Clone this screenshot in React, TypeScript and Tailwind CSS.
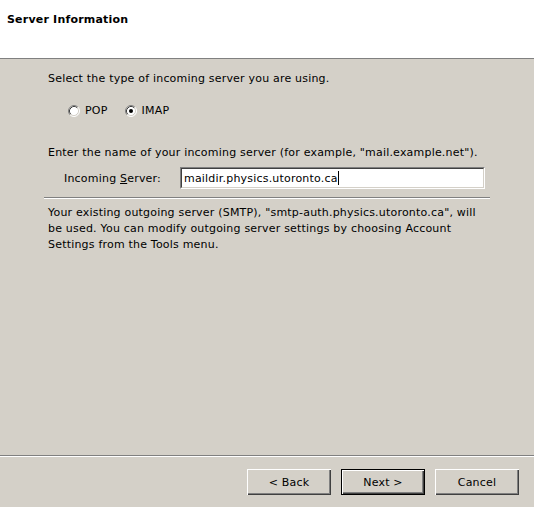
import React from "react";

const FONT = { fontFamily: '"DejaVu Sans", Tahoma, sans-serif' };

function Radio({ checked }: { checked?: boolean }) {
  return (
    <svg width="12" height="12" viewBox="0 0 12 12" className="shrink-0">
      <circle cx="6" cy="6" r="5" fill="#ffffff" />
      <path d="M2.11 9.89 A5.5 5.5 0 0 1 9.89 2.11" stroke="#808080" fill="none" />
      <path d="M9.89 2.11 A5.5 5.5 0 0 1 2.11 9.89" stroke="#ffffff" fill="none" />
      <path d="M2.82 9.18 A4.5 4.5 0 0 1 9.18 2.82" stroke="#404040" fill="none" />
      <path d="M9.18 2.82 A4.5 4.5 0 0 1 2.82 9.18" stroke="#d4d0c8" fill="none" />
      {checked && <circle cx="6" cy="6" r="2" fill="#000000" />}
    </svg>
  );
}

function WinButton({ label, isDefault }: { label: string; isDefault?: boolean }) {
  return (
    <button
      className={
        isDefault
          ? "w-[84px] h-[26px] border border-black bg-[#d4d0c8] text-[11px] text-black tracking-[0.2px] shadow-[inset_1px_1px_#ffffff,inset_-1px_-1px_#404040,inset_-2px_-2px_#808080]"
          : "w-[84px] h-[26px] bg-[#d4d0c8] text-[11px] text-black tracking-[0.2px] shadow-[inset_1px_1px_#ffffff,inset_-1px_-1px_#404040,inset_-2px_-2px_#808080]"
      }
    >
      {label}
    </button>
  );
}

export default function App() {
  return (
    <div
      className="w-[534px] h-[507px] bg-[#d4d0c8] flex flex-col text-[11px] leading-[13px] tracking-[0.2px] text-black"
      style={FONT}
    >
      {/* Header */}
      <div className="h-[59px] bg-white border-b border-[#808080] pl-[7px] pt-[13px] font-bold shrink-0">
        Server Information
      </div>

      {/* Body */}
      <div className="flex-1 flex flex-col pl-[44px] w-[490px]">
        <div className="pl-[4px] mt-[13px]">Select the type of incoming server you are using.</div>

        <div className="flex items-center pl-[24px] mt-[19px]">
          <Radio />
          <span className="ml-[5px]">POP</span>
          <span className="ml-[17px]">
            <Radio checked />
          </span>
          <span className="ml-[5px]">IMAP</span>
        </div>

        <div className="pl-[4px] mt-[29px]">
          Enter the name of your incoming server (for example, "mail.example.net").
        </div>

        <div className="flex items-center mt-[8px] pl-[20px]">
          <span className="w-[116px]">
            Incoming <span className="underline">S</span>erver:
          </span>
          <div className="w-[305px] h-[22px] bg-white border border-t-[#808080] border-l-[#808080] border-b-white border-r-white">
            <div className="h-full flex items-center pl-[2px] border border-t-[#404040] border-l-[#404040] border-b-[#d4d0c8] border-r-[#d4d0c8]">
              maildir.physics.utoronto.ca
              <span className="inline-block w-px h-[14px] bg-black" />
            </div>
          </div>
        </div>

        <div className="mt-[8px] border-t border-[#808080] border-b border-b-white" />

        <div className="pl-[4px] mt-[6px] leading-[16px]">
          Your existing outgoing server (SMTP), "smtp-auth.physics.utoronto.ca", will
          <br />
          be used. You can modify outgoing server settings by choosing Account
          <br />
          Settings from the Tools menu.
        </div>
      </div>

      {/* Footer */}
      <div className="border-t border-[#808080] border-b border-b-white" />
      <div className="h-[50px] flex justify-end gap-[10px] pr-[15px] pt-[12px] shrink-0">
        <WinButton label="< Back" />
        <WinButton label="Next >" isDefault />
        <WinButton label="Cancel" />
      </div>
    </div>
  );
}
